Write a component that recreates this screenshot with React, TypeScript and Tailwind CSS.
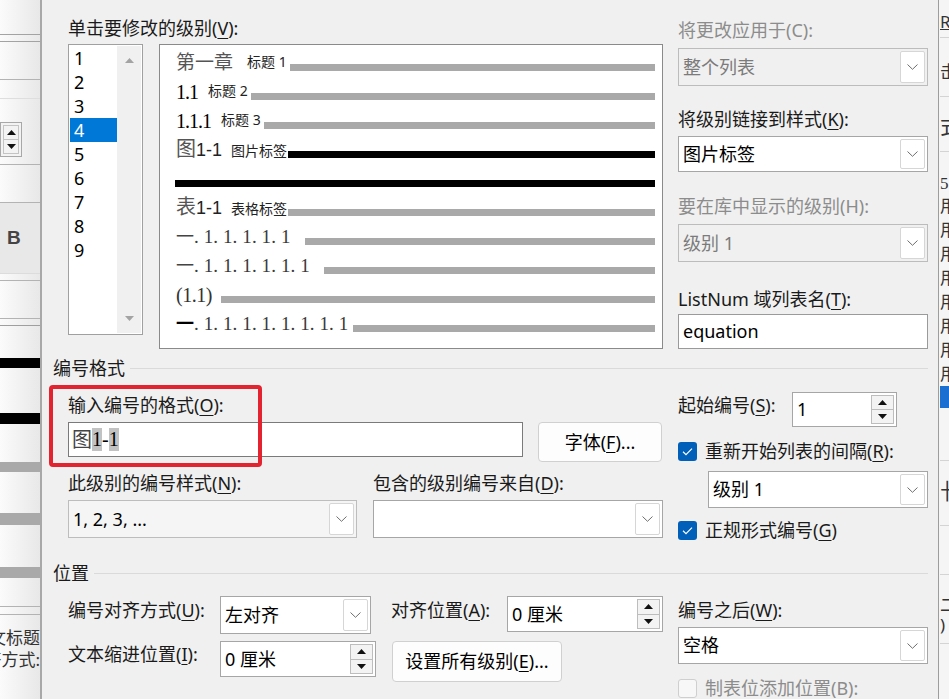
import React from "react";

const ui = "font-['Noto_Sans','Noto_Sans_CJK_SC',sans-serif]";
const serif = "font-['Liberation_Serif','Noto_Sans_CJK_SC',serif]";

function K({ children }: { children: React.ReactNode }) {
  return <span className="underline decoration-1 underline-offset-[3px]">{children}</span>;
}

function Label({ children, muted, className = "" }: { children: React.ReactNode; muted?: boolean; className?: string }) {
  return (
    <div className={`h-[22px] shrink-0 whitespace-nowrap text-[18px] leading-[22px] ${muted ? "text-[#8c8c8c]" : "text-[#1a1a1a]"} ${className}`}>
      {children}
    </div>
  );
}

function Chevron() {
  return (
    <svg width="11" height="6" viewBox="0 0 11 6">
      <path d="M0.5 0.5 L5.5 5.3 L10.5 0.5" fill="none" stroke="#6e6e6e" strokeWidth="1" />
    </svg>
  );
}

function Tri({ up, color = "#111" }: { up?: boolean; color?: string }) {
  return (
    <svg width="9" height="5" viewBox="0 0 9 5">
      <path d={up ? "M0 5 L4.5 0 L9 5 Z" : "M0 0 L4.5 5 L9 0 Z"} fill={color} />
    </svg>
  );
}

function Combo({ value, muted, soft, className = "" }: { value: string; muted?: boolean; soft?: boolean; className?: string }) {
  const box = muted ? "border-[#bcbcbc] bg-[#f0f0f0]" : soft ? "border-[#bdbdbd] bg-[#f5f5f5]" : "border-[#a6a6a6] bg-white";
  return (
    <div className={`flex shrink-0 items-stretch border ${box} ${className}`}>
      <div className={`flex flex-1 items-center whitespace-nowrap pl-[4px] text-[18px] ${muted ? "text-[#7b7b7b]" : "text-black"}`}>{value}</div>
      <div className="my-[2px] mr-[2px] flex w-[25px] items-center justify-center rounded-[2px] border border-[#d6d6d6] bg-white">
        <Chevron />
      </div>
    </div>
  );
}

function Spinner({ value, className = "" }: { value: string; className?: string }) {
  return (
    <div className={`flex shrink-0 border border-[#a6a6a6] bg-white ${className}`}>
      <div className="flex flex-1 items-center whitespace-nowrap pl-[4px] text-[18px]">{value}</div>
      <div className="my-[2px] mr-[2px] flex w-[23px] flex-col">
        <div className="flex flex-1 items-center justify-center border border-[#bdbdbd] bg-[#f3f3f3]">
          <Tri up />
        </div>
        <div className="flex flex-1 items-center justify-center border border-t-0 border-[#bdbdbd] bg-[#f3f3f3]">
          <Tri />
        </div>
      </div>
    </div>
  );
}

function Button({ children, className = "" }: { children: React.ReactNode; className?: string }) {
  return (
    <div className={`flex shrink-0 items-center justify-center whitespace-nowrap rounded-[4px] border border-[#d0d0d0] bg-[#fdfdfd] text-[18px] ${className}`}>
      {children}
    </div>
  );
}

function Check({ checked }: { checked?: boolean }) {
  if (checked) {
    return (
      <div className="flex h-[19px] w-[19px] shrink-0 items-center justify-center rounded-[3px] bg-[#005fb8]">
        <svg width="19" height="19" viewBox="0 0 19 19">
          <path d="M5 9.8 L8 12.6 L14 6.6" fill="none" stroke="#fff" strokeWidth="1.2" />
        </svg>
      </div>
    );
  }
  return <div className="h-[19px] w-[19px] shrink-0 rounded-[3px] border border-[#cfcfcf] bg-[#f7f7f7]" />;
}

function Section({ title }: { title: string }) {
  return (
    <div className="flex h-[22px] shrink-0 items-center gap-[5px] pl-[11px] pr-[10px]">
      <span className="whitespace-nowrap text-[18px] leading-[22px] text-[#1a1a1a]">{title}</span>
      <div className="h-px flex-1 bg-[#dadada]" />
    </div>
  );
}

function LevelList() {
  const levels = [1, 2, 3, 4, 5, 6, 7, 8, 9];
  return (
    <div className="flex h-[291px] w-[75px] shrink-0 border border-[#a0a0a0] bg-white p-px">
      <div className="w-[47px]">
        {levels.map((n) => (
          <div key={n} className={`h-[24px] pl-[4px] text-[18px] leading-[24px] ${n === 4 ? "bg-[#0078d7] text-white" : "text-black"}`}>
            {n}
          </div>
        ))}
      </div>
      <div className="flex flex-1 flex-col items-center justify-between bg-[#f0f0f0] py-[12px]">
        <Tri up color="#a3a3a3" />
        <Tri color="#a3a3a3" />
      </div>
    </div>
  );
}

function Bar({ dark, className = "" }: { dark?: boolean; className?: string }) {
  return <div className={`h-[7px] flex-1 ${dark ? "bg-black" : "bg-[#a9a9a9]"} ${className}`} />;
}

function Small({ children, className = "" }: { children: React.ReactNode; className?: string }) {
  return <span className={`text-[14px] leading-[14px] text-[#222] ${className}`}>{children}</span>;
}

function Caption({ lead, tag, dark }: { lead: string; tag: string; dark?: boolean }) {
  return (
    <div className="flex h-[29px] shrink-0 items-end whitespace-nowrap">
      <span className="mb-[-1px] text-[20px] leading-[20px] text-[#555]">{lead}</span>
      <span className="mb-[-2px] font-['Liberation_Sans',sans-serif] text-[18px] leading-[20px] text-[#222]">1-1</span>
      <span className="ml-[9px] text-[14px] leading-[14px] text-[#222]">{tag}</span>
      <Bar dark={dark} className="ml-[1px]" />
    </div>
  );
}

function Dotted({ text, gap, bold }: { text: string; gap: string; bold?: boolean }) {
  return (
    <div className="flex h-[29px] shrink-0 items-end whitespace-nowrap">
      <span className={`mb-[-1px] text-[18px] leading-[20px] ${bold ? "font-bold text-black" : "text-[#444]"}`}>一</span>
      <span className={`mb-[-2px] ${serif} text-[19px] leading-[20px] tracking-[0.1px] text-[#3a3a3a]`}>{text}</span>
      <Bar className={gap} />
    </div>
  );
}

function Preview() {
  return (
    <div className="ml-[16px] flex h-[305px] w-[504px] shrink-0 flex-col border border-[#8a8a8a] bg-white pl-[16px] pr-[7px]">
      <div className="flex h-[26px] shrink-0 items-end whitespace-nowrap">
        <span className="mb-[-1px] text-[19px] leading-[20px] text-[#555]">第一章</span>
        <Small className="mb-[2px] ml-[14px]">标题 1</Small>
        <Bar className="ml-[3px]" />
      </div>
      <div className="flex h-[29px] shrink-0 items-end whitespace-nowrap">
        <span className={`mb-[-2px] ${serif} text-[20px] leading-[20px] tracking-[-1px] text-black`}>1.1</span>
        <Small className="mb-[2px] ml-[10px]">标题 2</Small>
        <Bar className="ml-[3px]" />
      </div>
      <div className="flex h-[29px] shrink-0 items-end whitespace-nowrap">
        <span className={`mb-[-2px] ${serif} text-[20px] leading-[20px] tracking-[-1px] text-black`}>1.1.1</span>
        <Small className="mb-[2px] ml-[10px]">标题 3</Small>
        <Bar className="ml-[3px]" />
      </div>
      <Caption lead="图" tag="图片标签" dark />
      <div className="flex h-[29px] shrink-0 items-end">
        <Bar dark className="-ml-[1px]" />
      </div>
      <Caption lead="表" tag="表格标签" />
      <Dotted text=". 1. 1. 1. 1. 1" gap="ml-[14px]" />
      <Dotted text=". 1. 1. 1. 1. 1. 1" gap="ml-[14px]" />
      <div className="flex h-[29px] shrink-0 items-end whitespace-nowrap">
        <span className={`mb-[-2px] ${serif} text-[20px] leading-[20px] tracking-[-0.5px] text-[#333]`}>(1.1)</span>
        <Bar className="ml-[9px]" />
      </div>
      <Dotted text=". 1. 1. 1. 1. 1. 1. 1. 1" gap="ml-[5px]" bold />
    </div>
  );
}

function Dialog() {
  return (
    <div className="relative flex w-[896px] shrink-0 flex-col bg-[#f0f0f0]">
      <div className="flex pl-[26px] pt-[17px]">
        <div className="w-[595px] shrink-0">
          <Label>
            单击要修改的级别(<K>V</K>):
          </Label>
          <div className="mt-[5px] flex">
            <LevelList />
            <Preview />
          </div>
        </div>
        <div className="ml-[15px] w-[250px] shrink-0">
          <Label muted className="mt-[2px]">
            将更改应用于(C):
          </Label>
          <Combo muted value="整个列表" className="mt-[7px] h-[38px]" />
          <Label className="mt-[22px]">
            将级别链接到样式(<K>K</K>):
          </Label>
          <Combo value="图片标签" className="mt-[6px] h-[36px]" />
          <Label muted className="mt-[23px]">
            要在库中显示的级别(H):
          </Label>
          <Combo muted value="级别 1" className="mt-[7px] h-[38px]" />
          <Label className="mt-[26px]">
            ListNum 域列表名(<K>T</K>):
          </Label>
          <div className="mt-[4px] flex h-[35px] items-center border border-[#9a9a9a] bg-white pl-[4px] text-[18px]">equation</div>
        </div>
      </div>

      <div className="mt-[8px]">
        <Section title="编号格式" />
      </div>
      <div className="flex pl-[26px]">
        <div className="w-[595px] shrink-0">
          <Label className="mt-[15px]">
            输入编号的格式(<K>O</K>):
          </Label>
          <div className="mt-[6px] flex items-start">
            <div className="flex h-[35px] w-[455px] shrink-0 items-center border border-[#7a7a7a] bg-white pl-[3px]">
              <span className="text-[20px] leading-[23px] text-[#444]">图</span>
              <span className={`${serif} bg-[#c2c2c2] text-[20px] leading-[23px]`}>1</span>
              <span className={`${serif} text-[20px] leading-[23px]`}>-</span>
              <span className={`${serif} bg-[#c2c2c2] text-[20px] leading-[23px]`}>1</span>
            </div>
            <Button className="ml-[15px] h-[40px] w-[124px]">
              字体(<K>F</K>)...
            </Button>
          </div>
          <div className="mt-[10px] flex">
            <Label className="w-[305px]">
              此级别的编号样式(<K>N</K>):
            </Label>
            <Label>
              包含的级别编号来自(<K>D</K>):
            </Label>
          </div>
          <div className="mt-[6px] flex">
            <Combo soft value="1, 2, 3, ..." className="h-[38px] w-[289px]" />
            <Combo value="" className="ml-[16px] h-[38px] w-[290px]" />
          </div>
        </div>
        <div className="ml-[15px] w-[250px] shrink-0">
          <div className="mt-[13px] flex items-start">
            <Label className="mt-[2px] w-[114px]">
              起始编号(<K>S</K>):
            </Label>
            <Spinner value="1" className="h-[35px] w-[105px]" />
          </div>
          <div className="mt-[13px] flex h-[22px] items-center">
            <Check checked />
            <Label className="ml-[8px]">
              重新开始列表的间隔(<K>R</K>):
            </Label>
          </div>
          <Combo value="级别 1" className="ml-[30px] mt-[9px] h-[37px] w-[220px]" />
          <div className="mt-[11px] flex h-[22px] items-center">
            <Check checked />
            <Label className="ml-[8px]">
              正规形式编号(<K>G</K>)
            </Label>
          </div>
        </div>
      </div>

      <div className="mt-[21px]">
        <Section title="位置" />
      </div>
      <div className="flex pl-[26px]">
        <div className="w-[595px] shrink-0">
          <div className="mt-[12px] flex items-start">
            <Label className="mt-[3px] w-[152px]">
              编号对齐方式(<K>U</K>):
            </Label>
            <Combo value="左对齐" className="h-[38px] w-[151px]" />
            <Label className="ml-[20px] mt-[3px] w-[116px]">
              对齐位置(<K>A</K>):
            </Label>
            <Spinner value="0 厘米" className="h-[36px] w-[156px]" />
          </div>
          <div className="mt-[7px] flex items-start">
            <Label className="mt-[2px] w-[152px]">
              文本缩进位置(<K>I</K>):
            </Label>
            <Spinner value="0 厘米" className="h-[36px] w-[156px]" />
            <Button className="ml-[16px] h-[41px] w-[170px]">
              设置所有级别(<K>E</K>)...
            </Button>
          </div>
        </div>
        <div className="ml-[15px] w-[250px] shrink-0">
          <Label className="mt-[15px]">
            编号之后(<K>W</K>):
          </Label>
          <Combo value="空格" className="mt-[6px] h-[37px]" />
          <div className="mt-[13px] flex h-[22px] items-center">
            <Check />
            <Label muted className="ml-[8px]">
              制表位添加位置(B):
            </Label>
          </div>
        </div>
      </div>

      {/* red annotation frame */}
      <div className="pointer-events-none absolute left-[7px] top-[385px] h-[82px] w-[213px] rounded-[4px] border-[4px] border-[#e3232f]" />
    </div>
  );
}

function LeftStrip() {
  return (
    <div className="flex w-[42px] shrink-0 flex-col overflow-hidden border-r-[2px] border-[#a8a8a8] bg-gradient-to-r from-[#fbfbfb] to-[#e8e8e8]">
      <div className="h-[34px] shrink-0" />
      <div className="h-[8px] shrink-0 border-y border-[#a3a3a3]" />
      <div className="h-[38px] shrink-0 border-b border-[#b3b3b3]" />
      <div className="h-[19px] shrink-0 border-b border-[#dedede]" />
      <div className="h-[66px] shrink-0 border-b border-[#b3b3b3] pt-[23px]">
        <div className="flex h-[35px] w-[22px] flex-col border border-[#a8a8a8] bg-[#f3f3f3] p-[2px]">
          <div className="flex flex-1 items-center justify-center border border-[#c4c4c4]">
            <Tri up />
          </div>
          <div className="flex flex-1 items-center justify-center border border-t-0 border-[#c4c4c4]">
            <Tri />
          </div>
        </div>
      </div>
      <div className="h-[38px] shrink-0 border-b border-[#b3b3b3]" />
      <div className="flex h-[71px] shrink-0 items-center border-b border-[#dcdcdc] bg-[#e8e8e8] pl-[7px]">
        <span className="font-['Liberation_Sans',sans-serif] text-[19px] font-bold text-[#444]">B</span>
      </div>
      <div className="h-[7px] shrink-0 border-b border-[#b3b3b3]" />
      <div className="h-[38px] shrink-0 border-b border-[#b3b3b3]" />
      <div className="h-[7px] shrink-0 border-b border-[#9f9f9f]" />
      <div className="h-[32px] shrink-0" />
      <div className="h-[10px] shrink-0 bg-black" />
      <div className="h-[45px] shrink-0" />
      <div className="h-[11px] shrink-0 bg-black" />
      <div className="h-[38px] shrink-0" />
      <div className="h-[10px] shrink-0 bg-[#a9a9a9]" />
      <div className="h-[41px] shrink-0" />
      <div className="h-[12px] shrink-0 bg-[#a9a9a9]" />
      <div className="h-[42px] shrink-0" />
      <div className="h-[11px] shrink-0 bg-[#a9a9a9]" />
      <div className="h-[29px] shrink-0 border-b border-[#b3b3b3]" />
      <div className="h-[8px] shrink-0 border-b border-[#b3b3b3]" />
      <div className="mt-[12px] flex h-[22px] shrink-0 justify-end whitespace-nowrap text-[17px] leading-[22px] text-[#333]">正文标题</div>
      <div className="flex h-[22px] shrink-0 justify-end whitespace-nowrap text-[17px] leading-[22px] text-[#333]">对齐方式:</div>
    </div>
  );
}

function RightStrip() {
  const rows = [0, 1, 2, 3, 4, 5, 6, 7];
  return (
    <div className="flex w-[11px] shrink-0 flex-col overflow-hidden whitespace-nowrap border-l border-[#9d9d9d] bg-[#f5f5f5] pl-px text-[17px] leading-[20px] text-[#333]">
      <div className="mt-[12px] h-[20px] shrink-0">
        <span className="underline">R</span>)
      </div>
      <div className="mt-[5px] h-px shrink-0 bg-[#d4d4d4]" />
      <div className="mt-[24px] h-[20px] shrink-0">击</div>
      <div className="mt-[14px] h-px shrink-0 bg-[#d4d4d4]" />
      <div className="mt-[16px] h-[24px] shrink-0 text-[22px] leading-[24px]">式</div>
      <div className="mt-[14px] h-px shrink-0 bg-[#d4d4d4]" />
      <div className={`mt-[22px] h-[20px] shrink-0 ${serif}`}>5</div>
      {rows.map((r) => (
        <div key={r} className="h-[24px] shrink-0 leading-[24px]">
          用
        </div>
      ))}
      <div className="h-[22px] shrink-0 bg-[#1a6fd0]" />
      <div className="mt-[52px] h-px shrink-0 bg-[#d4d4d4]" />
      <div className="mt-[16px] h-[26px] shrink-0 text-[22px] leading-[26px]">卄</div>
      <div className="mt-[22px] h-px shrink-0 bg-[#d4d4d4]" />
      <div className="mt-[48px] h-px shrink-0 bg-[#d4d4d4]" />
      <div className="mt-[20px] h-[20px] shrink-0">二</div>
      <div className="h-[20px] shrink-0">)</div>
      <div className="mt-[8px] h-px shrink-0 bg-[#d4d4d4]" />
    </div>
  );
}

export default function App() {
  return (
    <div className={`flex h-[699px] w-[949px] overflow-hidden bg-[#f0f0f0] text-black ${ui}`}>
      <LeftStrip />
      <Dialog />
      <RightStrip />
    </div>
  );
}
